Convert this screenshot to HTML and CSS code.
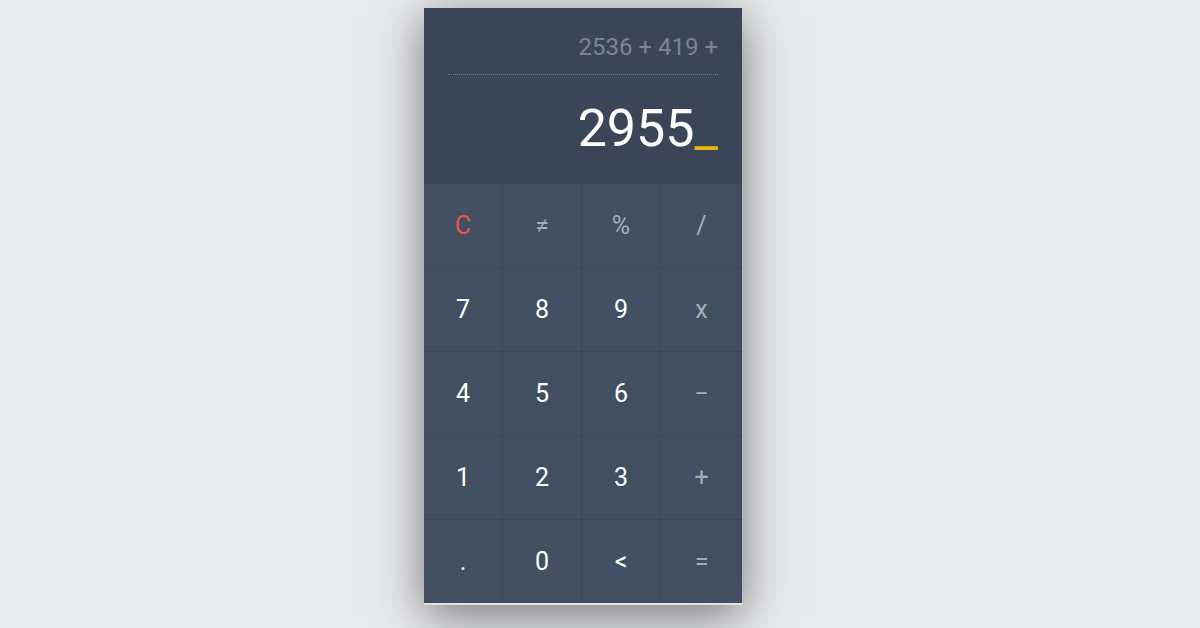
FILE: index.html
```html
<!DOCTYPE html>
<html>
<head>
<meta charset="utf-8">
<link rel="stylesheet" href="styles.css">
</head>
<body>
<div class="calc">
  <div class="display">
    <div class="history">2536 + 419 +</div>
    <div class="rule"></div>
    <div class="current">2955<span class="cursor">_</span></div>
  </div>
  <div class="keys">
    <div class="key clear">C</div>
    <div class="key op">≠</div>
    <div class="key op">%</div>
    <div class="key op">/</div>
    <div class="key">7</div>
    <div class="key">8</div>
    <div class="key">9</div>
    <div class="key op">x</div>
    <div class="key">4</div>
    <div class="key">5</div>
    <div class="key">6</div>
    <div class="key op">−</div>
    <div class="key">1</div>
    <div class="key">2</div>
    <div class="key">3</div>
    <div class="key op">+</div>
    <div class="key">.</div>
    <div class="key">0</div>
    <div class="key">&lt;</div>
    <div class="key op">=</div>
  </div>
</div>
</body>
</html>
```
FILE: styles.css
```css
html, body { margin: 0; padding: 0; }
body {
  background: #e9eaec;
  font-family: Roboto, "Liberation Sans", sans-serif;
  height: 628px;
  overflow: hidden;
  display: flex;
  align-items: flex-start;
  padding: 8px 0 0 424px;
  box-sizing: border-box;
}
.calc {
  width: 318px;
  background: #dfe3e8;
  box-shadow: 0 10px 45px rgba(0,0,0,0.5);
  padding-bottom: 2px;
}
.display {
  background: #3a4557;
  height: 175px;
  padding: 0 24px;
  box-sizing: border-box;
  display: flex;
  flex-direction: column;
  align-items: stretch;
}
.history {
  text-align: right;
  color: #7b8592;
  font-size: 24px;
  line-height: 28px;
  margin-top: 25px;
}
.rule {
  border-top: 1px dotted #6f7989;
  margin-top: 13px;
}
.current {
  text-align: right;
  color: #ffffff;
  font-size: 52px;
  line-height: 60px;
  margin-top: 24px;
}
.cursor { color: #e5b20e; }
.keys {
  display: grid;
  grid-template-columns: 78px 78px 78px 81px;
  grid-template-rows: repeat(5, 83px);
  gap: 1px;
  background: #3b4758;
  padding-top: 1px;
}
.key {
  background: #424f62;
  color: #ffffff;
  font-size: 25px;
  display: flex;
  align-items: center;
  justify-content: center;
}
.key.op { color: #a7adb5; }
.key.clear { color: #e4574a; }
```
